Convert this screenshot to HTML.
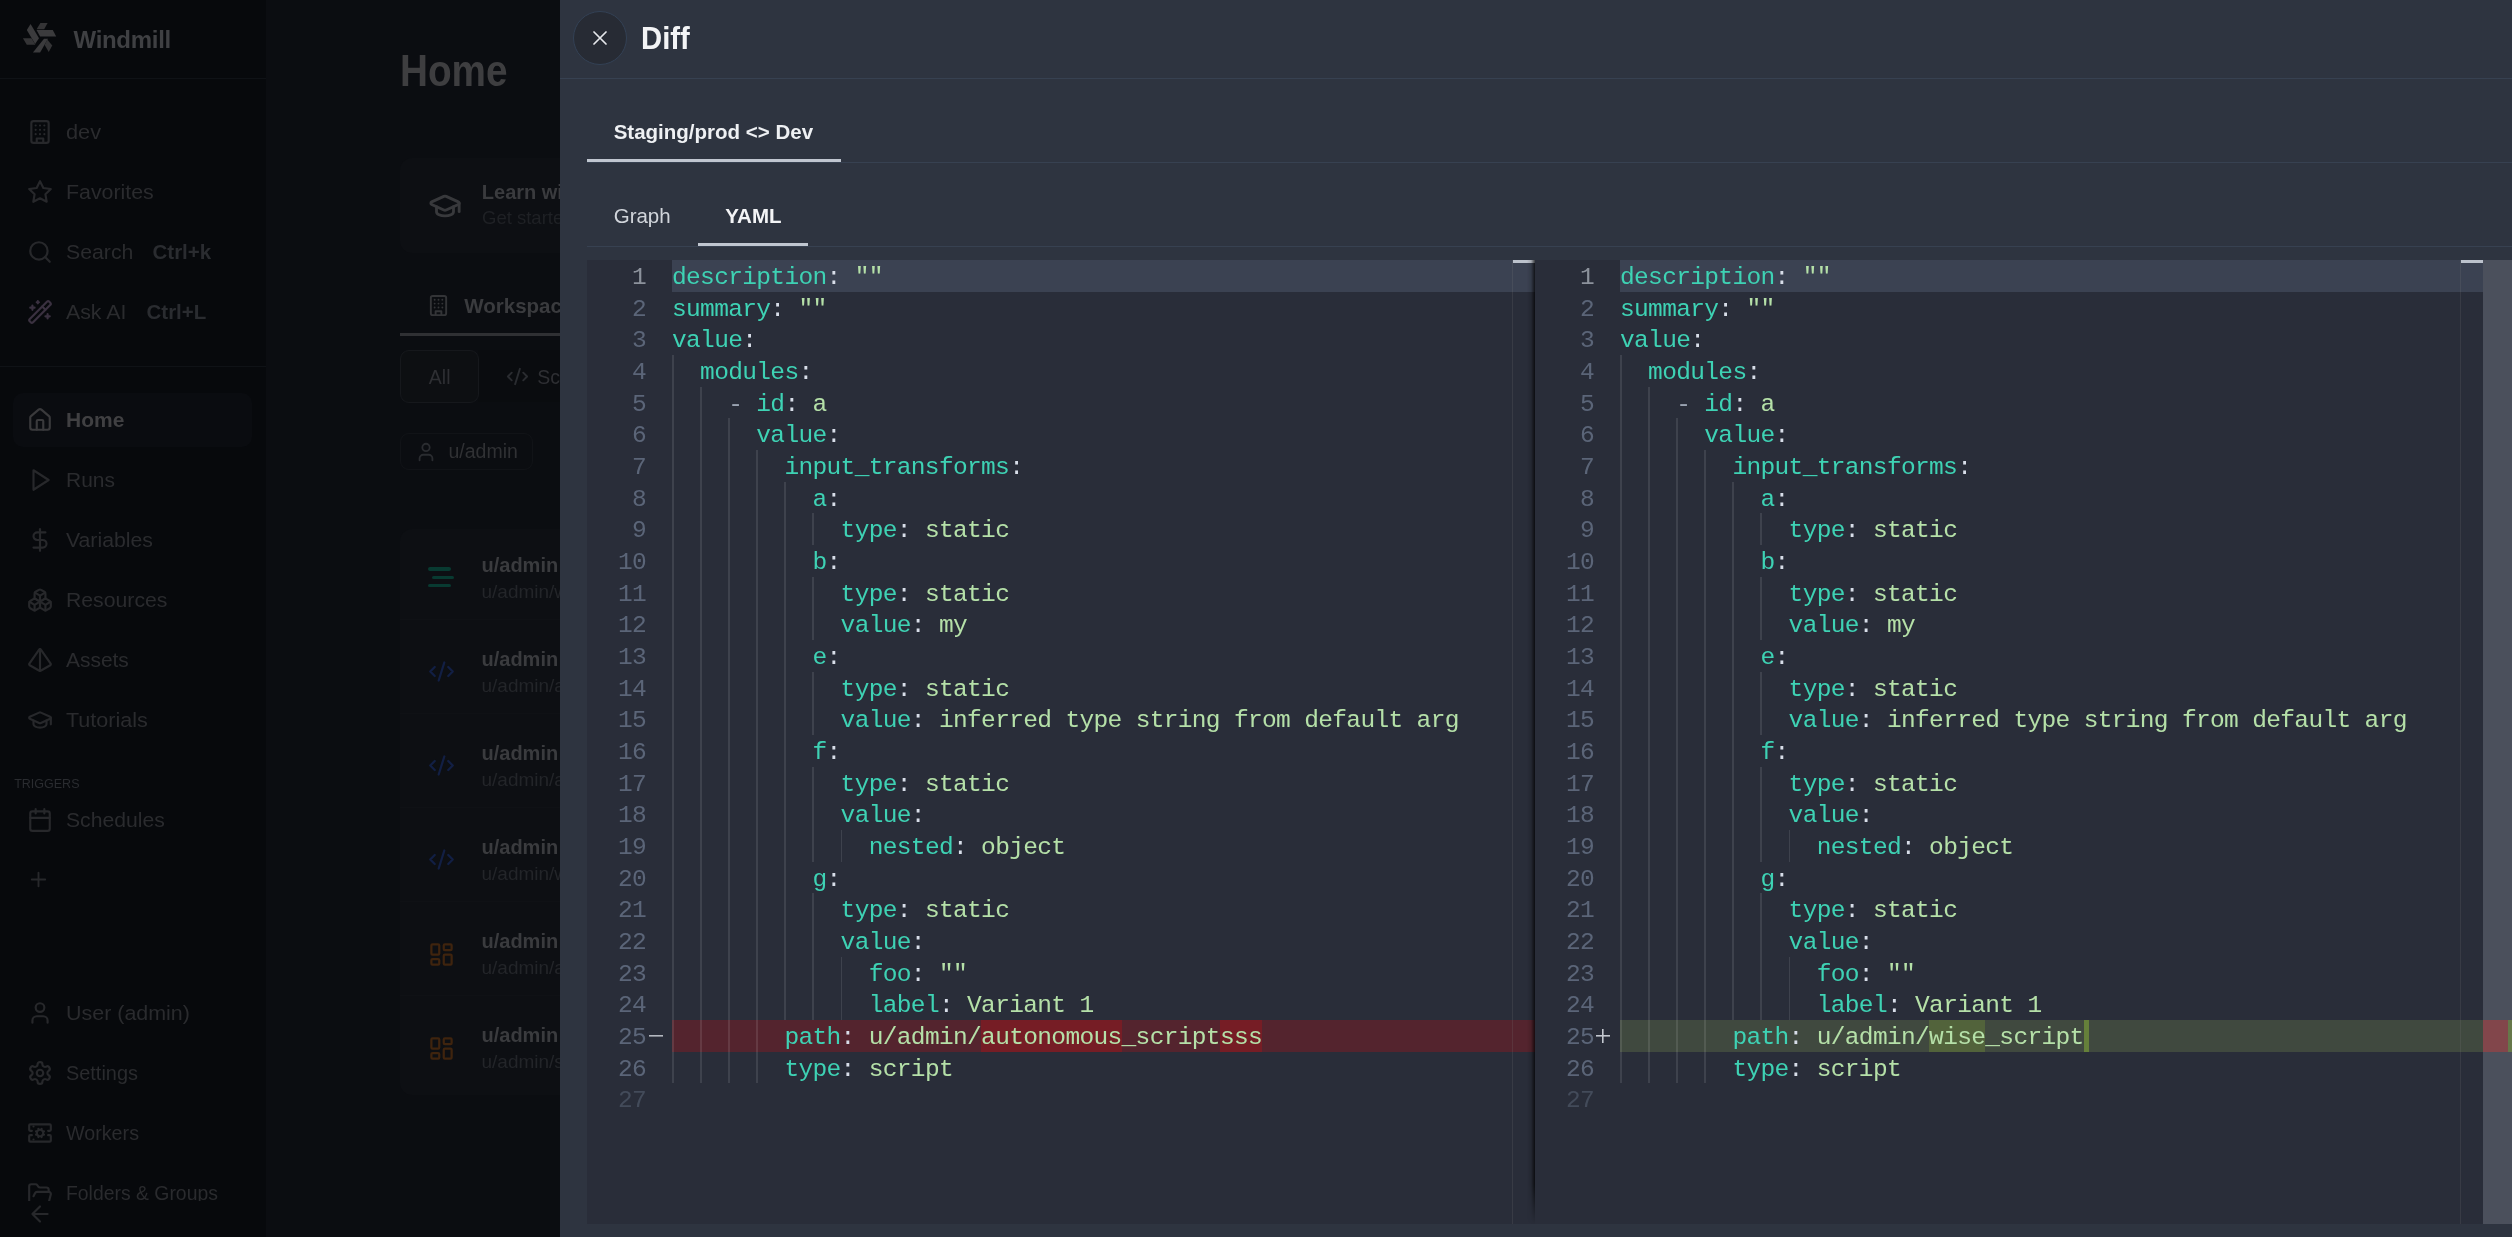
<!DOCTYPE html>
<html><head><meta charset="utf-8"><title>Diff</title><style>
*{margin:0;padding:0;box-sizing:border-box}
html,body{width:2512px;height:1237px;overflow:hidden;background:#0b0d11;font-family:"Liberation Sans",sans-serif}
#root{position:absolute;left:0;top:0;width:2512px;height:1237px;overflow:hidden;will-change:transform;background:#0b0d11}
.t{position:absolute;white-space:nowrap}
.abs{position:absolute}
.ed{position:absolute;top:260px;width:948px;height:964px;background:#292d39;overflow:hidden}
.hl{position:absolute;left:85px;right:0;height:31.667px;background:#3b4252}
.rmline{position:absolute;left:85px;right:0;height:31.667px;background:#54242e}
.rmtxt{position:absolute;height:31.667px;background:#761d25}
.adline{position:absolute;left:85px;right:0;height:31.667px;background:#40493f}
.adtxt{position:absolute;height:31.667px;background:#52633b}
.adtxt2{position:absolute;height:31.667px;background:#65803a}
.gd{position:absolute;width:1.67px;height:31.667px;background:rgba(255,255,255,0.10)}
.ln{position:absolute;left:0;width:59px;text-align:right;font-family:"Liberation Mono",monospace;font-size:24.5px;letter-spacing:-0.654px;line-height:31.667px;color:#5b6578;white-space:pre}
.ln.a{color:#8c929c}
.ln.e{color:#434b5a}
.mkm{position:absolute;left:62px;width:14px;height:31.667px;background:linear-gradient(#b4b8c0,#b4b8c0) no-repeat 0 50%/14px 1.6px}
.mkp{position:absolute;left:61px;width:14px;height:31.667px;background:linear-gradient(#c4c8d0,#c4c8d0) no-repeat 0 50%/14px 1.6px,linear-gradient(#c4c8d0,#c4c8d0) no-repeat 6.2px 50%/1.6px 14px}
.cl{position:absolute;left:85px;font-family:"Liberation Mono",monospace;font-size:24.5px;letter-spacing:-0.654px;line-height:31.667px;white-space:pre;color:#d8dee9}
.k{color:#3ed2b4} .v{color:#b5e0a8} .o{color:#d8dee9} .d{color:#9aa3b2}
.rb{position:absolute;left:925px;top:0;width:1px;height:100%;background:rgba(127,127,127,0.18)}
.cur{position:absolute;left:926px;top:0;width:22px;height:3px;background:#bcc2cc}
</style></head>
<body><div id="root">
<div class="abs" style="left:0;top:0;width:266px;height:1237px;background:#07090c"></div>
<div class="abs" style="left:0;top:78px;width:266px;height:1px;background:#0f1216"></div>
<div class="abs" style="left:0;top:366px;width:266px;height:1px;background:#0f1216"></div>
<svg class="t" style="left:0;top:0" width="60" height="60" viewBox="0 0 60 60">
<g fill="#3b3b3d">
<polygon points="30.6,24.0 39.0,38.3 35.1,43.9 26.8,30.1"/>
<polygon points="40.4,22.9 47.6,22.9 44.2,29.3 36.6,29.3" fill="#343436"/>
<polygon points="36.5,29.9 52.8,29.9 56.2,36.6 40.1,36.6"/>
<polygon points="22.9,38.3 31.5,38.3 35.4,44.7 26.8,44.7" fill="#343436"/>
<polygon points="32.9,52.6 40.1,52.6 48.0,38.7 44.0,38.7"/>
<polygon points="47.2,39.4 52.3,45.5 48.7,51.9 44.7,45.1" fill="#343436"/>
</g></svg>
<div class="t" style="left:73.50px;top:27.98px;font-size:24px;line-height:24px;color:#3f4043;font-weight:700;letter-spacing:-0.3px;">Windmill</div>
<svg class="t" style="left:27.30px;top:119.00px" width="26" height="26" viewBox="0 0 24 24" fill="none" stroke="#27282b" stroke-width="2" stroke-linecap="round" stroke-linejoin="round"><rect width="16" height="20" x="4" y="2" rx="2" ry="2"/><path d="M9 22v-4h6v4"/><path d="M8 6h.01M16 6h.01M12 6h.01M12 10h.01M12 14h.01M16 10h.01M16 14h.01M8 10h.01M8 14h.01"/></svg>
<div class="t" style="left:66.20px;top:121.85px;font-size:20.5px;line-height:20.5px;color:#2a2b2e;transform:scaleX(1.0625);transform-origin:0 0;">dev</div>
<svg class="t" style="left:27.30px;top:179.00px" width="26" height="26" viewBox="0 0 24 24" fill="none" stroke="#27282b" stroke-width="2" stroke-linecap="round" stroke-linejoin="round"><polygon points="12 2 15.09 8.26 22 9.27 17 14.14 18.18 21.02 12 17.77 5.82 21.02 7 14.14 2 9.27 8.91 8.26 12 2"/></svg>
<div class="t" style="left:66.20px;top:181.85px;font-size:20.5px;line-height:20.5px;color:#2a2b2e;transform:scaleX(1.0407);transform-origin:0 0;">Favorites</div>
<svg class="t" style="left:27.30px;top:239.00px" width="26" height="26" viewBox="0 0 24 24" fill="none" stroke="#27282b" stroke-width="2" stroke-linecap="round" stroke-linejoin="round"><circle cx="11" cy="11" r="8"/><path d="m21 21-4.3-4.3"/></svg>
<div class="t" style="left:66.20px;top:241.85px;font-size:20.5px;line-height:20.5px;color:#2a2b2e;transform:scaleX(1.0371);transform-origin:0 0;">Search</div>
<svg class="t" style="left:27.30px;top:299.00px" width="26" height="26" viewBox="0 0 24 24" fill="none" stroke="#3a3140" stroke-width="2" stroke-linecap="round" stroke-linejoin="round"><path d="m21.64 3.64-1.28-1.28a1.21 1.21 0 0 0-1.72 0L2.36 18.64a1.21 1.21 0 0 0 0 1.72l1.28 1.28a1.2 1.2 0 0 0 1.72 0L21.64 5.36a1.2 1.2 0 0 0 0-1.72"/><path d="m14 7 3 3"/><path d="M5 6v4M19 14v4M10 2v2M7 8H3M21 16h-4M11 3H9"/></svg>
<div class="t" style="left:66.20px;top:301.85px;font-size:20.5px;line-height:20.5px;color:#2a2b2e;transform:scaleX(1.0393);transform-origin:0 0;">Ask AI</div>
<div class="t" style="left:152.50px;top:241.85px;font-size:20.5px;line-height:20.5px;color:#2a2c30;font-weight:700;">Ctrl+k</div>
<div class="t" style="left:146.50px;top:301.85px;font-size:20.5px;line-height:20.5px;color:#2a2c30;font-weight:700;">Ctrl+L</div>
<div class="abs" style="left:13px;top:393px;width:239px;height:54px;border-radius:10px;background:#0a0c10"></div>
<svg class="t" style="left:27.30px;top:407.00px" width="26" height="26" viewBox="0 0 24 24" fill="none" stroke="#3a3a3c" stroke-width="2" stroke-linecap="round" stroke-linejoin="round"><path d="M15 21v-8a1 1 0 0 0-1-1h-4a1 1 0 0 0-1 1v8"/><path d="M3 10a2 2 0 0 1 .709-1.528l7-5.999a2 2 0 0 1 2.582 0l7 5.999A2 2 0 0 1 21 10v9a2 2 0 0 1-2 2H5a2 2 0 0 1-2-2z"/></svg>
<div class="t" style="left:66.20px;top:409.85px;font-size:20.5px;line-height:20.5px;color:#404042;font-weight:700;transform:scaleX(1.0236);transform-origin:0 0;">Home</div>
<svg class="t" style="left:27.30px;top:467.00px" width="26" height="26" viewBox="0 0 24 24" fill="none" stroke="#27282b" stroke-width="2" stroke-linecap="round" stroke-linejoin="round"><polygon points="6 3 20 12 6 21 6 3"/></svg>
<div class="t" style="left:66.20px;top:469.85px;font-size:20.5px;line-height:20.5px;color:#2a2b2e;transform:scaleX(1.0222);transform-origin:0 0;">Runs</div>
<svg class="t" style="left:27.30px;top:527.00px" width="26" height="26" viewBox="0 0 24 24" fill="none" stroke="#27282b" stroke-width="2" stroke-linecap="round" stroke-linejoin="round"><line x1="12" x2="12" y1="2" y2="22"/><path d="M17 5H9.5a3.5 3.5 0 0 0 0 7h5a3.5 3.5 0 0 1 0 7H6"/></svg>
<div class="t" style="left:66.20px;top:529.85px;font-size:20.5px;line-height:20.5px;color:#2a2b2e;transform:scaleX(1.0349);transform-origin:0 0;">Variables</div>
<svg class="t" style="left:27.30px;top:587.00px" width="26" height="26" viewBox="0 0 24 24" fill="none" stroke="#27282b" stroke-width="2" stroke-linecap="round" stroke-linejoin="round"><path d="M2.97 12.92A2 2 0 0 0 2 14.63v3.24a2 2 0 0 0 .97 1.71l3 1.8a2 2 0 0 0 2.06 0L12 19v-5.5l-5-3-4.03 2.42Z"/><path d="m7 16.5-4.74-2.85M7 16.5l5-3M7 16.5v5.17"/><path d="M12 13.5V19l3.97 2.38a2 2 0 0 0 2.06 0l3-1.8a2 2 0 0 0 .97-1.71v-3.24a2 2 0 0 0-.97-1.71L17 10.5l-5 3Z"/><path d="m17 16.5-5-3M17 16.5l4.74-2.85M17 16.5v5.17"/><path d="M7.97 4.42A2 2 0 0 0 7 6.13v4.37l5 3 5-3V6.13a2 2 0 0 0-.97-1.71l-3-1.8a2 2 0 0 0-2.06 0l-3 1.8Z"/><path d="M12 8 7.26 5.15M12 8l4.74-2.85M12 13.5V8"/></svg>
<div class="t" style="left:66.20px;top:589.85px;font-size:20.5px;line-height:20.5px;color:#2a2b2e;transform:scaleX(1.0347);transform-origin:0 0;">Resources</div>
<svg class="t" style="left:27.30px;top:647.00px" width="26" height="26" viewBox="0 0 24 24" fill="none" stroke="#27282b" stroke-width="2" stroke-linecap="round" stroke-linejoin="round"><path d="M2.5 16.88a1 1 0 0 1-.32-1.43l9-13.02a1 1 0 0 1 1.64 0l9 13.01a1 1 0 0 1-.32 1.44l-8.51 4.86a2 2 0 0 1-1.98 0Z"/><path d="M12 2v20"/></svg>
<div class="t" style="left:66.20px;top:649.85px;font-size:20.5px;line-height:20.5px;color:#2a2b2e;transform:scaleX(1.0213);transform-origin:0 0;">Assets</div>
<svg class="t" style="left:27.30px;top:707.00px" width="26" height="26" viewBox="0 0 24 24" fill="none" stroke="#27282b" stroke-width="2" stroke-linecap="round" stroke-linejoin="round"><path d="M21.42 10.922a1 1 0 0 0-.019-1.838L12.83 5.18a2 2 0 0 0-1.66 0L2.6 9.08a1 1 0 0 0 0 1.832l8.57 3.908a2 2 0 0 0 1.66 0z"/><path d="M22 10v6"/><path d="M6 12.5V16a6 3 0 0 0 12 0v-3.5"/></svg>
<div class="t" style="left:66.20px;top:709.85px;font-size:20.5px;line-height:20.5px;color:#2a2b2e;transform:scaleX(1.0513);transform-origin:0 0;">Tutorials</div>
<svg class="t" style="left:27.30px;top:807.00px" width="26" height="26" viewBox="0 0 24 24" fill="none" stroke="#27282b" stroke-width="2" stroke-linecap="round" stroke-linejoin="round"><path d="M8 2v4M16 2v4"/><rect width="18" height="18" x="3" y="4" rx="2"/><path d="M3 10h18"/></svg>
<div class="t" style="left:66.20px;top:809.85px;font-size:20.5px;line-height:20.5px;color:#2a2b2e;transform:scaleX(1.0319);transform-origin:0 0;">Schedules</div>
<svg class="t" style="left:27.30px;top:1000.00px" width="26" height="26" viewBox="0 0 24 24" fill="none" stroke="#27282b" stroke-width="2" stroke-linecap="round" stroke-linejoin="round"><path d="M19 21v-2a4 4 0 0 0-4-4H9a4 4 0 0 0-4 4v2"/><circle cx="12" cy="7" r="4"/></svg>
<div class="t" style="left:66.20px;top:1002.85px;font-size:20.5px;line-height:20.5px;color:#2a2b2e;transform:scaleX(1.0461);transform-origin:0 0;">User (admin)</div>
<svg class="t" style="left:27.30px;top:1060.00px" width="26" height="26" viewBox="0 0 24 24" fill="none" stroke="#27282b" stroke-width="2" stroke-linecap="round" stroke-linejoin="round"><path d="M12.22 2h-.44a2 2 0 0 0-2 2v.18a2 2 0 0 1-1 1.73l-.43.25a2 2 0 0 1-2 0l-.15-.08a2 2 0 0 0-2.73.73l-.22.38a2 2 0 0 0 .73 2.73l.15.1a2 2 0 0 1 1 1.72v.51a2 2 0 0 1-1 1.74l-.15.09a2 2 0 0 0-.73 2.73l.22.38a2 2 0 0 0 2.73.73l.15-.08a2 2 0 0 1 2 0l.43.25a2 2 0 0 1 1 1.73V20a2 2 0 0 0 2 2h.44a2 2 0 0 0 2-2v-.18a2 2 0 0 1 1-1.73l.43-.25a2 2 0 0 1 2 0l.15.08a2 2 0 0 0 2.73-.73l.22-.39a2 2 0 0 0-.73-2.73l-.15-.08a2 2 0 0 1-1-1.74v-.5a2 2 0 0 1 1-1.74l.15-.09a2 2 0 0 0 .73-2.73l-.22-.38a2 2 0 0 0-2.73-.73l-.15.08a2 2 0 0 1-2 0l-.43-.25a2 2 0 0 1-1-1.73V4a2 2 0 0 0-2-2z"/><circle cx="12" cy="12" r="3"/></svg>
<div class="t" style="left:66.20px;top:1062.85px;font-size:20.5px;line-height:20.5px;color:#2a2b2e;transform:scaleX(0.9708);transform-origin:0 0;">Settings</div>
<svg class="t" style="left:27.30px;top:1120.00px" width="26" height="26" viewBox="0 0 24 24" fill="none" stroke="#27282b" stroke-width="2" stroke-linecap="round" stroke-linejoin="round"><path d="m10.852 14.772-.383.923M13.148 14.772a3 3 0 1 0-2.296-5.544l-.383-.923M13.148 9.228l.383-.923M13.53 15.696l-.382-.924a3 3 0 1 1-2.296-5.544M14.772 10.852l.923-.383M14.772 13.148l.923.383"/><path d="M4.5 10H3a1 1 0 0 1-1-1V5a1 1 0 0 1 1-1h18a1 1 0 0 1 1 1v4a1 1 0 0 1-1 1h-1.5"/><path d="M4.5 14H3a1 1 0 0 0-1 1v4a1 1 0 0 0 1 1h18a1 1 0 0 0 1-1v-4a1 1 0 0 0-1-1h-1.5"/><path d="M6 18h.01M6 6h.01M9.228 10.852l-.923-.383M9.228 13.148l-.923.383"/></svg>
<div class="t" style="left:66.20px;top:1122.85px;font-size:20.5px;line-height:20.5px;color:#2a2b2e;transform:scaleX(0.9613);transform-origin:0 0;">Workers</div>
<svg class="t" style="left:27.20px;top:868.20px" width="23" height="23" viewBox="0 0 24 24" fill="none" stroke="#27282b" stroke-width="2" stroke-linecap="round" stroke-linejoin="round"><path d="M5 12h14M12 5v14"/></svg>
<div class="t" style="left:14.20px;top:778.42px;font-size:12.5px;line-height:12.5px;color:#2a2c30;">TRIGGERS</div>
<div class="abs" style="left:0;top:1170px;width:266px;height:31px;overflow:hidden">
<svg class="t" style="left:27.30px;top:10.50px" width="26" height="26" viewBox="0 0 24 24" fill="none" stroke="#27282b" stroke-width="2" stroke-linecap="round" stroke-linejoin="round"><path d="m6 14 1.5-2.9A2 2 0 0 1 9.24 10H20a2 2 0 0 1 1.94 2.5l-1.54 6a2 2 0 0 1-1.95 1.5H4a2 2 0 0 1-2-2V5a2 2 0 0 1 2-2h3.9a2 2 0 0 1 1.69.9l.81 1.2a2 2 0 0 0 1.67.9H18a2 2 0 0 1 2 2v2"/></svg>
<div class="t" style="left:66.20px;top:13.15px;font-size:20.5px;line-height:20.5px;color:#2a2b2e;transform:scaleX(0.9456);transform-origin:0 0;">Folders &amp; Groups</div>
</div>
<svg class="t" style="left:27.00px;top:1201.40px" width="26" height="26" viewBox="0 0 24 24" fill="none" stroke="#27282b" stroke-width="2" stroke-linecap="round" stroke-linejoin="round"><path d="m12 19-7-7 7-7M19 12H5"/></svg>
<div class="t" style="left:400.00px;top:49.25px;font-size:44px;line-height:44px;color:#3e3e40;font-weight:700;transform:scaleX(0.88);transform-origin:0 0;">Home</div>
<div class="abs" style="left:400px;top:157.5px;width:220px;height:95px;border-radius:12px;background:#0d0f13"></div>
<svg class="t" style="left:427.70px;top:188.60px" width="34" height="34" viewBox="0 0 24 24" fill="none" stroke="#38393c" stroke-width="2" stroke-linecap="round" stroke-linejoin="round"><path d="M21.42 10.922a1 1 0 0 0-.019-1.838L12.83 5.18a2 2 0 0 0-1.66 0L2.6 9.08a1 1 0 0 0 0 1.832l8.57 3.908a2 2 0 0 0 1.66 0z"/><path d="M22 10v6"/><path d="M6 12.5V16a6 3 0 0 0 12 0v-3.5"/></svg>
<div class="t" style="left:481.80px;top:182.07px;font-size:20px;line-height:20px;color:#3a3b3e;font-weight:700;">Learn with tutorials</div>
<div class="t" style="left:482.00px;top:209.04px;font-size:18.5px;line-height:18.5px;color:#1f2125;">Get started</div>
<svg class="t" style="left:427.00px;top:294.00px" width="23" height="23" viewBox="0 0 24 24" fill="none" stroke="#333437" stroke-width="2" stroke-linecap="round" stroke-linejoin="round"><rect width="16" height="20" x="4" y="2" rx="2" ry="2"/><path d="M9 22v-4h6v4"/><path d="M8 6h.01M16 6h.01M12 6h.01M12 10h.01M12 14h.01M16 10h.01M16 14h.01M8 10h.01M8 14h.01"/></svg>
<div class="t" style="left:464.30px;top:295.65px;font-size:20.5px;line-height:20.5px;color:#3a3b3e;font-weight:700;">Workspace</div>
<div class="abs" style="left:400px;top:333px;width:200px;height:3px;background:#2f3033"></div>
<div class="abs" style="left:478px;top:350px;width:120px;height:52px;background:#0a0c0f"></div>
<div class="abs" style="left:400px;top:350px;width:79px;height:53px;border-radius:9px;background:#0d0f12;border:1px solid #16181c"></div>
<div class="t" style="left:428.80px;top:368.19px;font-size:19.5px;line-height:19.5px;color:#2e2f33;">All</div>
<svg class="t" style="left:506.20px;top:365.00px" width="23" height="23" viewBox="0 0 24 24" fill="none" stroke="#2a2c30" stroke-width="2" stroke-linecap="round" stroke-linejoin="round"><path d="m18 16 4-4-4-4M6 8l-4 4 4 4M14.5 4l-5 16"/></svg>
<div class="t" style="left:537.30px;top:368.19px;font-size:19.5px;line-height:19.5px;color:#2e2f33;">Scripts</div>
<div class="abs" style="left:400px;top:433px;width:133px;height:37px;border-radius:9px;border:1px solid #111317"></div>
<svg class="t" style="left:414.60px;top:440.60px" width="22" height="22" viewBox="0 0 24 24" fill="none" stroke="#2a2c30" stroke-width="2" stroke-linecap="round" stroke-linejoin="round"><path d="M19 21v-2a4 4 0 0 0-4-4H9a4 4 0 0 0-4 4v2"/><circle cx="12" cy="7" r="4"/></svg>
<div class="t" style="left:448.50px;top:442.19px;font-size:19.5px;line-height:19.5px;color:#303134;">u/admin</div>
<div class="abs" style="left:400px;top:529px;width:220px;height:566px;border-radius:12px;background:#0d0f13"></div>
<div class="t" style="left:481.50px;top:554.77px;font-size:20px;line-height:20px;color:#3a3b3e;font-weight:700;">u/admin</div>
<div class="t" style="left:481.50px;top:581.62px;font-size:19px;line-height:19px;color:#232529;">u/admin/wscript</div>
<div class="abs" style="left:427.8px;top:567.0px;width:23.2px;height:3.6px;border-radius:2px;background:#083a31"></div>
<div class="abs" style="left:431.7px;top:575.8px;width:22.0px;height:3.6px;border-radius:2px;background:#083a31"></div>
<div class="abs" style="left:427.8px;top:583.8px;width:23.2px;height:3.6px;border-radius:2px;background:#083a31"></div>
<div class="abs" style="left:400px;top:618.7px;width:200px;height:1px;background:#0f1115"></div>
<div class="t" style="left:481.50px;top:648.77px;font-size:20px;line-height:20px;color:#3a3b3e;font-weight:700;">u/admin</div>
<div class="t" style="left:481.50px;top:675.62px;font-size:19px;line-height:19px;color:#232529;">u/admin/ascript</div>
<svg class="t" style="left:427.80px;top:657.70px" width="27" height="27" viewBox="0 0 24 24" fill="none" stroke="#121f44" stroke-width="2" stroke-linecap="round" stroke-linejoin="round"><path d="m18 16 4-4-4-4M6 8l-4 4 4 4M14.5 4l-5 16"/></svg>
<div class="abs" style="left:400px;top:712.7px;width:200px;height:1px;background:#0f1115"></div>
<div class="t" style="left:481.50px;top:742.77px;font-size:20px;line-height:20px;color:#3a3b3e;font-weight:700;">u/admin</div>
<div class="t" style="left:481.50px;top:769.62px;font-size:19px;line-height:19px;color:#232529;">u/admin/ascript</div>
<svg class="t" style="left:427.80px;top:751.70px" width="27" height="27" viewBox="0 0 24 24" fill="none" stroke="#121f44" stroke-width="2" stroke-linecap="round" stroke-linejoin="round"><path d="m18 16 4-4-4-4M6 8l-4 4 4 4M14.5 4l-5 16"/></svg>
<div class="abs" style="left:400px;top:806.7px;width:200px;height:1px;background:#0f1115"></div>
<div class="t" style="left:481.50px;top:836.77px;font-size:20px;line-height:20px;color:#3a3b3e;font-weight:700;">u/admin</div>
<div class="t" style="left:481.50px;top:863.62px;font-size:19px;line-height:19px;color:#232529;">u/admin/wscript</div>
<svg class="t" style="left:427.80px;top:845.70px" width="27" height="27" viewBox="0 0 24 24" fill="none" stroke="#121f44" stroke-width="2" stroke-linecap="round" stroke-linejoin="round"><path d="m18 16 4-4-4-4M6 8l-4 4 4 4M14.5 4l-5 16"/></svg>
<div class="abs" style="left:400px;top:900.7px;width:200px;height:1px;background:#0f1115"></div>
<div class="t" style="left:481.50px;top:930.77px;font-size:20px;line-height:20px;color:#3a3b3e;font-weight:700;">u/admin</div>
<div class="t" style="left:481.50px;top:957.62px;font-size:19px;line-height:19px;color:#232529;">u/admin/ascript</div>
<svg class="t" style="left:427.80px;top:941.20px" width="27" height="27" viewBox="0 0 24 24" fill="none" stroke="#3f240e" stroke-width="2" stroke-linecap="round" stroke-linejoin="round"><rect width="7" height="9" x="3" y="3" rx="1"/><rect width="7" height="5" x="14" y="3" rx="1"/><rect width="7" height="9" x="14" y="12" rx="1"/><rect width="7" height="5" x="3" y="16" rx="1"/></svg>
<div class="abs" style="left:400px;top:994.7px;width:200px;height:1px;background:#0f1115"></div>
<div class="t" style="left:481.50px;top:1024.77px;font-size:20px;line-height:20px;color:#3a3b3e;font-weight:700;">u/admin</div>
<div class="t" style="left:481.50px;top:1051.62px;font-size:19px;line-height:19px;color:#232529;">u/admin/sscript</div>
<svg class="t" style="left:427.80px;top:1035.20px" width="27" height="27" viewBox="0 0 24 24" fill="none" stroke="#3f240e" stroke-width="2" stroke-linecap="round" stroke-linejoin="round"><rect width="7" height="9" x="3" y="3" rx="1"/><rect width="7" height="5" x="14" y="3" rx="1"/><rect width="7" height="9" x="14" y="12" rx="1"/><rect width="7" height="5" x="3" y="16" rx="1"/></svg>
<div class="abs" style="left:560px;top:0;width:1952px;height:1237px;background:#2e3440"></div>
<div class="abs" style="left:560px;top:78px;width:1952px;height:1px;background:#374151"></div>
<div class="abs" style="left:573px;top:11px;width:54px;height:54px;border-radius:50%;background:#272b34;border:1px solid #334155"></div>
<svg class="t" style="left:592.5px;top:30.5px" width="14" height="14" viewBox="0 0 14 14"><path d="M1 1L13 13M13 1L1 13" stroke="#e5e7eb" stroke-width="1.7" stroke-linecap="round"/></svg>
<div class="t" style="left:641.00px;top:21.81px;font-size:32px;line-height:32px;color:#f3f4f6;font-weight:700;transform:scaleX(0.915);transform-origin:0 0;">Diff</div>
<div class="abs" style="left:587px;top:162px;width:1925px;height:1px;background:#374151"></div>
<div class="abs" style="left:587px;top:159px;width:254px;height:3px;background:#c0c6d0"></div>
<div class="t" style="left:613.70px;top:122.25px;font-size:20.5px;line-height:20.5px;color:#eef0f3;font-weight:700;">Staging/prod &lt;&gt; Dev</div>
<div class="abs" style="left:587px;top:246px;width:1925px;height:1px;background:#374151"></div>
<div class="abs" style="left:698px;top:243px;width:110px;height:3px;background:#c0c6d0"></div>
<div class="t" style="left:613.70px;top:205.65px;font-size:20.5px;line-height:20.5px;color:#d1d5db;">Graph</div>
<div class="t" style="left:725.30px;top:205.65px;font-size:20.5px;line-height:20.5px;color:#f3f4f6;font-weight:700;">YAML</div>
<div class="ed" style="left:587px;">
<div class="hl" style="top:0px;"></div>
<div class="rmline" style="top:760.01px;"></div>
<div class="rmtxt" style="top:760.01px;left:394.06px;width:140.48px"></div>
<div class="rmtxt" style="top:760.01px;left:632.87px;width:42.14px"></div>
<div class="gd" style="top:95.00px;left:85.00px"></div>
<div class="gd" style="top:126.67px;left:85.00px"></div>
<div class="gd" style="top:126.67px;left:113.10px"></div>
<div class="gd" style="top:158.34px;left:85.00px"></div>
<div class="gd" style="top:158.34px;left:113.10px"></div>
<div class="gd" style="top:158.34px;left:141.19px"></div>
<div class="gd" style="top:190.00px;left:85.00px"></div>
<div class="gd" style="top:190.00px;left:113.10px"></div>
<div class="gd" style="top:190.00px;left:141.19px"></div>
<div class="gd" style="top:190.00px;left:169.29px"></div>
<div class="gd" style="top:221.67px;left:85.00px"></div>
<div class="gd" style="top:221.67px;left:113.10px"></div>
<div class="gd" style="top:221.67px;left:141.19px"></div>
<div class="gd" style="top:221.67px;left:169.29px"></div>
<div class="gd" style="top:221.67px;left:197.38px"></div>
<div class="gd" style="top:253.34px;left:85.00px"></div>
<div class="gd" style="top:253.34px;left:113.10px"></div>
<div class="gd" style="top:253.34px;left:141.19px"></div>
<div class="gd" style="top:253.34px;left:169.29px"></div>
<div class="gd" style="top:253.34px;left:197.38px"></div>
<div class="gd" style="top:253.34px;left:225.48px"></div>
<div class="gd" style="top:285.00px;left:85.00px"></div>
<div class="gd" style="top:285.00px;left:113.10px"></div>
<div class="gd" style="top:285.00px;left:141.19px"></div>
<div class="gd" style="top:285.00px;left:169.29px"></div>
<div class="gd" style="top:285.00px;left:197.38px"></div>
<div class="gd" style="top:316.67px;left:85.00px"></div>
<div class="gd" style="top:316.67px;left:113.10px"></div>
<div class="gd" style="top:316.67px;left:141.19px"></div>
<div class="gd" style="top:316.67px;left:169.29px"></div>
<div class="gd" style="top:316.67px;left:197.38px"></div>
<div class="gd" style="top:316.67px;left:225.48px"></div>
<div class="gd" style="top:348.34px;left:85.00px"></div>
<div class="gd" style="top:348.34px;left:113.10px"></div>
<div class="gd" style="top:348.34px;left:141.19px"></div>
<div class="gd" style="top:348.34px;left:169.29px"></div>
<div class="gd" style="top:348.34px;left:197.38px"></div>
<div class="gd" style="top:348.34px;left:225.48px"></div>
<div class="gd" style="top:380.00px;left:85.00px"></div>
<div class="gd" style="top:380.00px;left:113.10px"></div>
<div class="gd" style="top:380.00px;left:141.19px"></div>
<div class="gd" style="top:380.00px;left:169.29px"></div>
<div class="gd" style="top:380.00px;left:197.38px"></div>
<div class="gd" style="top:411.67px;left:85.00px"></div>
<div class="gd" style="top:411.67px;left:113.10px"></div>
<div class="gd" style="top:411.67px;left:141.19px"></div>
<div class="gd" style="top:411.67px;left:169.29px"></div>
<div class="gd" style="top:411.67px;left:197.38px"></div>
<div class="gd" style="top:411.67px;left:225.48px"></div>
<div class="gd" style="top:443.34px;left:85.00px"></div>
<div class="gd" style="top:443.34px;left:113.10px"></div>
<div class="gd" style="top:443.34px;left:141.19px"></div>
<div class="gd" style="top:443.34px;left:169.29px"></div>
<div class="gd" style="top:443.34px;left:197.38px"></div>
<div class="gd" style="top:443.34px;left:225.48px"></div>
<div class="gd" style="top:475.00px;left:85.00px"></div>
<div class="gd" style="top:475.00px;left:113.10px"></div>
<div class="gd" style="top:475.00px;left:141.19px"></div>
<div class="gd" style="top:475.00px;left:169.29px"></div>
<div class="gd" style="top:475.00px;left:197.38px"></div>
<div class="gd" style="top:506.67px;left:85.00px"></div>
<div class="gd" style="top:506.67px;left:113.10px"></div>
<div class="gd" style="top:506.67px;left:141.19px"></div>
<div class="gd" style="top:506.67px;left:169.29px"></div>
<div class="gd" style="top:506.67px;left:197.38px"></div>
<div class="gd" style="top:506.67px;left:225.48px"></div>
<div class="gd" style="top:538.34px;left:85.00px"></div>
<div class="gd" style="top:538.34px;left:113.10px"></div>
<div class="gd" style="top:538.34px;left:141.19px"></div>
<div class="gd" style="top:538.34px;left:169.29px"></div>
<div class="gd" style="top:538.34px;left:197.38px"></div>
<div class="gd" style="top:538.34px;left:225.48px"></div>
<div class="gd" style="top:570.01px;left:85.00px"></div>
<div class="gd" style="top:570.01px;left:113.10px"></div>
<div class="gd" style="top:570.01px;left:141.19px"></div>
<div class="gd" style="top:570.01px;left:169.29px"></div>
<div class="gd" style="top:570.01px;left:197.38px"></div>
<div class="gd" style="top:570.01px;left:225.48px"></div>
<div class="gd" style="top:570.01px;left:253.58px"></div>
<div class="gd" style="top:601.67px;left:85.00px"></div>
<div class="gd" style="top:601.67px;left:113.10px"></div>
<div class="gd" style="top:601.67px;left:141.19px"></div>
<div class="gd" style="top:601.67px;left:169.29px"></div>
<div class="gd" style="top:601.67px;left:197.38px"></div>
<div class="gd" style="top:633.34px;left:85.00px"></div>
<div class="gd" style="top:633.34px;left:113.10px"></div>
<div class="gd" style="top:633.34px;left:141.19px"></div>
<div class="gd" style="top:633.34px;left:169.29px"></div>
<div class="gd" style="top:633.34px;left:197.38px"></div>
<div class="gd" style="top:633.34px;left:225.48px"></div>
<div class="gd" style="top:665.01px;left:85.00px"></div>
<div class="gd" style="top:665.01px;left:113.10px"></div>
<div class="gd" style="top:665.01px;left:141.19px"></div>
<div class="gd" style="top:665.01px;left:169.29px"></div>
<div class="gd" style="top:665.01px;left:197.38px"></div>
<div class="gd" style="top:665.01px;left:225.48px"></div>
<div class="gd" style="top:696.67px;left:85.00px"></div>
<div class="gd" style="top:696.67px;left:113.10px"></div>
<div class="gd" style="top:696.67px;left:141.19px"></div>
<div class="gd" style="top:696.67px;left:169.29px"></div>
<div class="gd" style="top:696.67px;left:197.38px"></div>
<div class="gd" style="top:696.67px;left:225.48px"></div>
<div class="gd" style="top:696.67px;left:253.58px"></div>
<div class="gd" style="top:728.34px;left:85.00px"></div>
<div class="gd" style="top:728.34px;left:113.10px"></div>
<div class="gd" style="top:728.34px;left:141.19px"></div>
<div class="gd" style="top:728.34px;left:169.29px"></div>
<div class="gd" style="top:728.34px;left:197.38px"></div>
<div class="gd" style="top:728.34px;left:225.48px"></div>
<div class="gd" style="top:728.34px;left:253.58px"></div>
<div class="gd" style="top:760.01px;left:85.00px"></div>
<div class="gd" style="top:760.01px;left:113.10px"></div>
<div class="gd" style="top:760.01px;left:141.19px"></div>
<div class="gd" style="top:760.01px;left:169.29px"></div>
<div class="gd" style="top:791.68px;left:85.00px"></div>
<div class="gd" style="top:791.68px;left:113.10px"></div>
<div class="gd" style="top:791.68px;left:141.19px"></div>
<div class="gd" style="top:791.68px;left:169.29px"></div>
<div class="ln a" style="top:2.00px">1</div>
<div class="ln" style="top:33.67px">2</div>
<div class="ln" style="top:65.33px">3</div>
<div class="ln" style="top:97.00px">4</div>
<div class="ln" style="top:128.67px">5</div>
<div class="ln" style="top:160.34px">6</div>
<div class="ln" style="top:192.00px">7</div>
<div class="ln" style="top:223.67px">8</div>
<div class="ln" style="top:255.34px">9</div>
<div class="ln" style="top:287.00px">10</div>
<div class="ln" style="top:318.67px">11</div>
<div class="ln" style="top:350.34px">12</div>
<div class="ln" style="top:382.00px">13</div>
<div class="ln" style="top:413.67px">14</div>
<div class="ln" style="top:445.34px">15</div>
<div class="ln" style="top:477.00px">16</div>
<div class="ln" style="top:508.67px">17</div>
<div class="ln" style="top:540.34px">18</div>
<div class="ln" style="top:572.01px">19</div>
<div class="ln" style="top:603.67px">20</div>
<div class="ln" style="top:635.34px">21</div>
<div class="ln" style="top:667.01px">22</div>
<div class="ln" style="top:698.67px">23</div>
<div class="ln" style="top:730.34px">24</div>
<div class="ln" style="top:762.01px">25</div>
<div class="ln" style="top:793.68px">26</div>
<div class="ln e" style="top:825.34px">27</div>
<div class="mkm" style="top:760.01px"></div>
<div class="cl" style="top:2.00px"><span class="k">description</span><span class="o">: </span><span class="v">&quot;&quot;</span></div>
<div class="cl" style="top:33.67px"><span class="k">summary</span><span class="o">: </span><span class="v">&quot;&quot;</span></div>
<div class="cl" style="top:65.33px"><span class="k">value</span><span class="o">:</span></div>
<div class="cl" style="top:97.00px">  <span class="k">modules</span><span class="o">:</span></div>
<div class="cl" style="top:128.67px">    <span class="d">- </span><span class="k">id</span><span class="o">: </span><span class="v">a</span></div>
<div class="cl" style="top:160.34px">      <span class="k">value</span><span class="o">:</span></div>
<div class="cl" style="top:192.00px">        <span class="k">input_transforms</span><span class="o">:</span></div>
<div class="cl" style="top:223.67px">          <span class="k">a</span><span class="o">:</span></div>
<div class="cl" style="top:255.34px">            <span class="k">type</span><span class="o">: </span><span class="v">static</span></div>
<div class="cl" style="top:287.00px">          <span class="k">b</span><span class="o">:</span></div>
<div class="cl" style="top:318.67px">            <span class="k">type</span><span class="o">: </span><span class="v">static</span></div>
<div class="cl" style="top:350.34px">            <span class="k">value</span><span class="o">: </span><span class="v">my</span></div>
<div class="cl" style="top:382.00px">          <span class="k">e</span><span class="o">:</span></div>
<div class="cl" style="top:413.67px">            <span class="k">type</span><span class="o">: </span><span class="v">static</span></div>
<div class="cl" style="top:445.34px">            <span class="k">value</span><span class="o">: </span><span class="v">inferred type string from default arg</span></div>
<div class="cl" style="top:477.00px">          <span class="k">f</span><span class="o">:</span></div>
<div class="cl" style="top:508.67px">            <span class="k">type</span><span class="o">: </span><span class="v">static</span></div>
<div class="cl" style="top:540.34px">            <span class="k">value</span><span class="o">:</span></div>
<div class="cl" style="top:572.01px">              <span class="k">nested</span><span class="o">: </span><span class="v">object</span></div>
<div class="cl" style="top:603.67px">          <span class="k">g</span><span class="o">:</span></div>
<div class="cl" style="top:635.34px">            <span class="k">type</span><span class="o">: </span><span class="v">static</span></div>
<div class="cl" style="top:667.01px">            <span class="k">value</span><span class="o">:</span></div>
<div class="cl" style="top:698.67px">              <span class="k">foo</span><span class="o">: </span><span class="v">&quot;&quot;</span></div>
<div class="cl" style="top:730.34px">              <span class="k">label</span><span class="o">: </span><span class="v">Variant 1</span></div>
<div class="cl" style="top:762.01px">        <span class="k">path</span><span class="o">: </span><span class="v">u/admin/autonomous_scriptsss</span></div>
<div class="cl" style="top:793.68px">        <span class="k">type</span><span class="o">: </span><span class="v">script</span></div>
<div class="cl" style="top:825.34px"></div>
<div class="rb"></div><div class="cur"></div>
</div>
<div class="ed" style="left:1535px;">
<div class="hl" style="top:0px;"></div>
<div class="adline" style="top:760.01px;"></div>
<div class="adtxt" style="top:760.01px;left:394.06px;width:56.19px"></div>
<div class="adtxt2" style="top:760.01px;left:548.58px;width:5px"></div>
<div class="gd" style="top:95.00px;left:85.00px"></div>
<div class="gd" style="top:126.67px;left:85.00px"></div>
<div class="gd" style="top:126.67px;left:113.10px"></div>
<div class="gd" style="top:158.34px;left:85.00px"></div>
<div class="gd" style="top:158.34px;left:113.10px"></div>
<div class="gd" style="top:158.34px;left:141.19px"></div>
<div class="gd" style="top:190.00px;left:85.00px"></div>
<div class="gd" style="top:190.00px;left:113.10px"></div>
<div class="gd" style="top:190.00px;left:141.19px"></div>
<div class="gd" style="top:190.00px;left:169.29px"></div>
<div class="gd" style="top:221.67px;left:85.00px"></div>
<div class="gd" style="top:221.67px;left:113.10px"></div>
<div class="gd" style="top:221.67px;left:141.19px"></div>
<div class="gd" style="top:221.67px;left:169.29px"></div>
<div class="gd" style="top:221.67px;left:197.38px"></div>
<div class="gd" style="top:253.34px;left:85.00px"></div>
<div class="gd" style="top:253.34px;left:113.10px"></div>
<div class="gd" style="top:253.34px;left:141.19px"></div>
<div class="gd" style="top:253.34px;left:169.29px"></div>
<div class="gd" style="top:253.34px;left:197.38px"></div>
<div class="gd" style="top:253.34px;left:225.48px"></div>
<div class="gd" style="top:285.00px;left:85.00px"></div>
<div class="gd" style="top:285.00px;left:113.10px"></div>
<div class="gd" style="top:285.00px;left:141.19px"></div>
<div class="gd" style="top:285.00px;left:169.29px"></div>
<div class="gd" style="top:285.00px;left:197.38px"></div>
<div class="gd" style="top:316.67px;left:85.00px"></div>
<div class="gd" style="top:316.67px;left:113.10px"></div>
<div class="gd" style="top:316.67px;left:141.19px"></div>
<div class="gd" style="top:316.67px;left:169.29px"></div>
<div class="gd" style="top:316.67px;left:197.38px"></div>
<div class="gd" style="top:316.67px;left:225.48px"></div>
<div class="gd" style="top:348.34px;left:85.00px"></div>
<div class="gd" style="top:348.34px;left:113.10px"></div>
<div class="gd" style="top:348.34px;left:141.19px"></div>
<div class="gd" style="top:348.34px;left:169.29px"></div>
<div class="gd" style="top:348.34px;left:197.38px"></div>
<div class="gd" style="top:348.34px;left:225.48px"></div>
<div class="gd" style="top:380.00px;left:85.00px"></div>
<div class="gd" style="top:380.00px;left:113.10px"></div>
<div class="gd" style="top:380.00px;left:141.19px"></div>
<div class="gd" style="top:380.00px;left:169.29px"></div>
<div class="gd" style="top:380.00px;left:197.38px"></div>
<div class="gd" style="top:411.67px;left:85.00px"></div>
<div class="gd" style="top:411.67px;left:113.10px"></div>
<div class="gd" style="top:411.67px;left:141.19px"></div>
<div class="gd" style="top:411.67px;left:169.29px"></div>
<div class="gd" style="top:411.67px;left:197.38px"></div>
<div class="gd" style="top:411.67px;left:225.48px"></div>
<div class="gd" style="top:443.34px;left:85.00px"></div>
<div class="gd" style="top:443.34px;left:113.10px"></div>
<div class="gd" style="top:443.34px;left:141.19px"></div>
<div class="gd" style="top:443.34px;left:169.29px"></div>
<div class="gd" style="top:443.34px;left:197.38px"></div>
<div class="gd" style="top:443.34px;left:225.48px"></div>
<div class="gd" style="top:475.00px;left:85.00px"></div>
<div class="gd" style="top:475.00px;left:113.10px"></div>
<div class="gd" style="top:475.00px;left:141.19px"></div>
<div class="gd" style="top:475.00px;left:169.29px"></div>
<div class="gd" style="top:475.00px;left:197.38px"></div>
<div class="gd" style="top:506.67px;left:85.00px"></div>
<div class="gd" style="top:506.67px;left:113.10px"></div>
<div class="gd" style="top:506.67px;left:141.19px"></div>
<div class="gd" style="top:506.67px;left:169.29px"></div>
<div class="gd" style="top:506.67px;left:197.38px"></div>
<div class="gd" style="top:506.67px;left:225.48px"></div>
<div class="gd" style="top:538.34px;left:85.00px"></div>
<div class="gd" style="top:538.34px;left:113.10px"></div>
<div class="gd" style="top:538.34px;left:141.19px"></div>
<div class="gd" style="top:538.34px;left:169.29px"></div>
<div class="gd" style="top:538.34px;left:197.38px"></div>
<div class="gd" style="top:538.34px;left:225.48px"></div>
<div class="gd" style="top:570.01px;left:85.00px"></div>
<div class="gd" style="top:570.01px;left:113.10px"></div>
<div class="gd" style="top:570.01px;left:141.19px"></div>
<div class="gd" style="top:570.01px;left:169.29px"></div>
<div class="gd" style="top:570.01px;left:197.38px"></div>
<div class="gd" style="top:570.01px;left:225.48px"></div>
<div class="gd" style="top:570.01px;left:253.58px"></div>
<div class="gd" style="top:601.67px;left:85.00px"></div>
<div class="gd" style="top:601.67px;left:113.10px"></div>
<div class="gd" style="top:601.67px;left:141.19px"></div>
<div class="gd" style="top:601.67px;left:169.29px"></div>
<div class="gd" style="top:601.67px;left:197.38px"></div>
<div class="gd" style="top:633.34px;left:85.00px"></div>
<div class="gd" style="top:633.34px;left:113.10px"></div>
<div class="gd" style="top:633.34px;left:141.19px"></div>
<div class="gd" style="top:633.34px;left:169.29px"></div>
<div class="gd" style="top:633.34px;left:197.38px"></div>
<div class="gd" style="top:633.34px;left:225.48px"></div>
<div class="gd" style="top:665.01px;left:85.00px"></div>
<div class="gd" style="top:665.01px;left:113.10px"></div>
<div class="gd" style="top:665.01px;left:141.19px"></div>
<div class="gd" style="top:665.01px;left:169.29px"></div>
<div class="gd" style="top:665.01px;left:197.38px"></div>
<div class="gd" style="top:665.01px;left:225.48px"></div>
<div class="gd" style="top:696.67px;left:85.00px"></div>
<div class="gd" style="top:696.67px;left:113.10px"></div>
<div class="gd" style="top:696.67px;left:141.19px"></div>
<div class="gd" style="top:696.67px;left:169.29px"></div>
<div class="gd" style="top:696.67px;left:197.38px"></div>
<div class="gd" style="top:696.67px;left:225.48px"></div>
<div class="gd" style="top:696.67px;left:253.58px"></div>
<div class="gd" style="top:728.34px;left:85.00px"></div>
<div class="gd" style="top:728.34px;left:113.10px"></div>
<div class="gd" style="top:728.34px;left:141.19px"></div>
<div class="gd" style="top:728.34px;left:169.29px"></div>
<div class="gd" style="top:728.34px;left:197.38px"></div>
<div class="gd" style="top:728.34px;left:225.48px"></div>
<div class="gd" style="top:728.34px;left:253.58px"></div>
<div class="gd" style="top:760.01px;left:85.00px"></div>
<div class="gd" style="top:760.01px;left:113.10px"></div>
<div class="gd" style="top:760.01px;left:141.19px"></div>
<div class="gd" style="top:760.01px;left:169.29px"></div>
<div class="gd" style="top:791.68px;left:85.00px"></div>
<div class="gd" style="top:791.68px;left:113.10px"></div>
<div class="gd" style="top:791.68px;left:141.19px"></div>
<div class="gd" style="top:791.68px;left:169.29px"></div>
<div class="ln a" style="top:2.00px">1</div>
<div class="ln" style="top:33.67px">2</div>
<div class="ln" style="top:65.33px">3</div>
<div class="ln" style="top:97.00px">4</div>
<div class="ln" style="top:128.67px">5</div>
<div class="ln" style="top:160.34px">6</div>
<div class="ln" style="top:192.00px">7</div>
<div class="ln" style="top:223.67px">8</div>
<div class="ln" style="top:255.34px">9</div>
<div class="ln" style="top:287.00px">10</div>
<div class="ln" style="top:318.67px">11</div>
<div class="ln" style="top:350.34px">12</div>
<div class="ln" style="top:382.00px">13</div>
<div class="ln" style="top:413.67px">14</div>
<div class="ln" style="top:445.34px">15</div>
<div class="ln" style="top:477.00px">16</div>
<div class="ln" style="top:508.67px">17</div>
<div class="ln" style="top:540.34px">18</div>
<div class="ln" style="top:572.01px">19</div>
<div class="ln" style="top:603.67px">20</div>
<div class="ln" style="top:635.34px">21</div>
<div class="ln" style="top:667.01px">22</div>
<div class="ln" style="top:698.67px">23</div>
<div class="ln" style="top:730.34px">24</div>
<div class="ln" style="top:762.01px">25</div>
<div class="ln" style="top:793.68px">26</div>
<div class="ln e" style="top:825.34px">27</div>
<div class="mkp" style="top:760.01px"></div>
<div class="cl" style="top:2.00px"><span class="k">description</span><span class="o">: </span><span class="v">&quot;&quot;</span></div>
<div class="cl" style="top:33.67px"><span class="k">summary</span><span class="o">: </span><span class="v">&quot;&quot;</span></div>
<div class="cl" style="top:65.33px"><span class="k">value</span><span class="o">:</span></div>
<div class="cl" style="top:97.00px">  <span class="k">modules</span><span class="o">:</span></div>
<div class="cl" style="top:128.67px">    <span class="d">- </span><span class="k">id</span><span class="o">: </span><span class="v">a</span></div>
<div class="cl" style="top:160.34px">      <span class="k">value</span><span class="o">:</span></div>
<div class="cl" style="top:192.00px">        <span class="k">input_transforms</span><span class="o">:</span></div>
<div class="cl" style="top:223.67px">          <span class="k">a</span><span class="o">:</span></div>
<div class="cl" style="top:255.34px">            <span class="k">type</span><span class="o">: </span><span class="v">static</span></div>
<div class="cl" style="top:287.00px">          <span class="k">b</span><span class="o">:</span></div>
<div class="cl" style="top:318.67px">            <span class="k">type</span><span class="o">: </span><span class="v">static</span></div>
<div class="cl" style="top:350.34px">            <span class="k">value</span><span class="o">: </span><span class="v">my</span></div>
<div class="cl" style="top:382.00px">          <span class="k">e</span><span class="o">:</span></div>
<div class="cl" style="top:413.67px">            <span class="k">type</span><span class="o">: </span><span class="v">static</span></div>
<div class="cl" style="top:445.34px">            <span class="k">value</span><span class="o">: </span><span class="v">inferred type string from default arg</span></div>
<div class="cl" style="top:477.00px">          <span class="k">f</span><span class="o">:</span></div>
<div class="cl" style="top:508.67px">            <span class="k">type</span><span class="o">: </span><span class="v">static</span></div>
<div class="cl" style="top:540.34px">            <span class="k">value</span><span class="o">:</span></div>
<div class="cl" style="top:572.01px">              <span class="k">nested</span><span class="o">: </span><span class="v">object</span></div>
<div class="cl" style="top:603.67px">          <span class="k">g</span><span class="o">:</span></div>
<div class="cl" style="top:635.34px">            <span class="k">type</span><span class="o">: </span><span class="v">static</span></div>
<div class="cl" style="top:667.01px">            <span class="k">value</span><span class="o">:</span></div>
<div class="cl" style="top:698.67px">              <span class="k">foo</span><span class="o">: </span><span class="v">&quot;&quot;</span></div>
<div class="cl" style="top:730.34px">              <span class="k">label</span><span class="o">: </span><span class="v">Variant 1</span></div>
<div class="cl" style="top:762.01px">        <span class="k">path</span><span class="o">: </span><span class="v">u/admin/wise_script</span></div>
<div class="cl" style="top:793.68px">        <span class="k">type</span><span class="o">: </span><span class="v">script</span></div>
<div class="cl" style="top:825.34px"></div>
<div class="rb"></div><div class="cur"></div>
</div>
<div class="abs" style="left:1527px;top:260px;width:8px;height:964px;background:linear-gradient(to right,rgba(0,0,0,0),rgba(0,0,0,0.12) 50%,rgba(0,0,0,0.7) 100%);-webkit-mask-image:linear-gradient(to bottom,#000 0,#000 calc(100% - 40px),transparent 100%)"></div>
<div class="abs" style="left:2483px;top:260px;width:29px;height:964px;background:#4b505c"></div>
<div class="abs" style="left:2483px;top:1020.01px;width:25px;height:31.67px;background:#82464b"></div>
<div class="abs" style="left:2508px;top:1020.01px;width:4px;height:31.67px;background:#66774a"></div>
</div></body></html>
